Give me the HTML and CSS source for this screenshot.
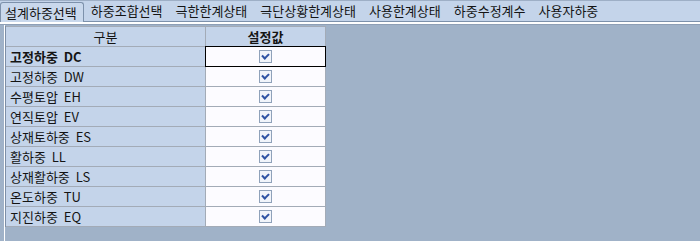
FILE: index.html
```html
<!DOCTYPE html>
<html>
<head>
    <title>설계하중선택</title>
    <link rel="stylesheet" href="styles.css">
</head>
<body>
    <div class="tabs">
        <div class="tab active">설계하중선택</div>
        <div class="tab">하중조합선택</div>
        <div class="tab">극한한계상태</div>
        <div class="tab">극단상황한계상태</div>
        <div class="tab">사용한계상태</div>
        <div class="tab">하중수정계수</div>
        <div class="tab">사용자하중</div>
    </div>
    <div class="strip"></div>

    <div class="page">
        <div class="frame">
            <div class="grid">
                <div class="head">구분</div>
                <div class="head bold">설정값</div>

                <div class="name bold">고정하중 DC</div>
                <div class="val focus"><span class="check"></span></div>

                <div class="name">고정하중 DW</div>
                <div class="val"><span class="check"></span></div>

                <div class="name">수평토압 EH</div>
                <div class="val"><span class="check"></span></div>

                <div class="name">연직토압 EV</div>
                <div class="val"><span class="check"></span></div>

                <div class="name">상재토하중 ES</div>
                <div class="val"><span class="check"></span></div>

                <div class="name">활하중 LL</div>
                <div class="val"><span class="check"></span></div>

                <div class="name">상재활하중 LS</div>
                <div class="val"><span class="check"></span></div>

                <div class="name">온도하중 TU</div>
                <div class="val"><span class="check"></span></div>

                <div class="name">지진하중 EQ</div>
                <div class="val"><span class="check"></span></div>
            </div>
        </div>
    </div>
</body>
</html>
```

FILE: styles.css
```css
html, body {
    height: 100%;
}
body {
    margin: 0;
    background: #a0b2c8;
    font-family: "Noto Sans CJK KR", "Noto Sans", sans-serif;
    font-size: 13px;
    color: #141414;
    display: flex;
    flex-direction: column;
}
.tabs {
    display: flex;
    box-sizing: border-box;
    height: 22px;
    background: #c4d4ea;
    border-top: 1px solid #9eafc6;
    border-bottom: 1px solid #7d91ab;
}
.tab {
    padding: 0 7px 0 6px;
    line-height: 20px;
    white-space: nowrap;
}
.tab.active {
    background: #c9d8ec;
    border: 1px solid #7d91ab;
    border-bottom: none;
    border-radius: 3px 3px 0 0;
    margin-top: 1px;
    margin-bottom: -1px;
    line-height: 19px;
    padding: 0 6px 0 4px;
    margin-right: 1px;
}
.strip {
    height: 2px;
    background: #ffffff;
    border-bottom: 1px solid #8e9fb6;
}
.page {
    flex: 1;
    display: flex;
    padding-left: 4px;
}
.frame {
    border-left: 1px solid #ffffff;
    padding-top: 1px;
}
.grid {
    display: grid;
    grid-template-columns: 199px 119px;
    grid-auto-rows: 19px;
    gap: 1px;
    padding: 1px 1px 1px 0;
    background: #a3abb7;
    border-left: 1px solid #7d8ea6;
}
.head {
    background: #c4d4ea;
    text-align: center;
    line-height: 19px;
}
.bold {
    font-weight: bold;
}
.name {
    background: #c4d4ea;
    line-height: 19px;
    padding-left: 4px;
    word-spacing: 3px;
}
.val {
    background: #fcfbff;
    display: flex;
    align-items: center;
    justify-content: center;
}
.focus {
    outline: 1px solid #000000;
}
.check {
    width: 11px;
    height: 11px;
    border: 1px solid #8fa1ba;
    background: #f1f4fa;
    display: flex;
    align-items: center;
    justify-content: center;
}
.check::after {
    content: "";
    width: 5px;
    height: 3px;
    border-left: 2px solid #2f53a3;
    border-bottom: 2px solid #2f53a3;
    transform: rotate(-45deg);
    margin-top: -2px;
}
```
